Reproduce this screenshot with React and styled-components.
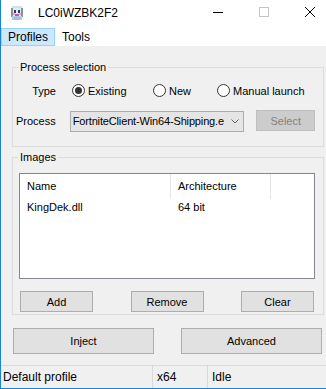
import React from 'react';
import styled, { createGlobalStyle } from 'styled-components';

const GlobalStyle = createGlobalStyle`
  html, body {
    margin: 0;
    padding: 0;
    overflow: hidden;
    background: #f0f0f0;
  }
  body {
    font-family: "Liberation Sans", Arial, sans-serif;
    font-size: 11px;
    color: #000;
  }
`;

const Window = styled.div`
  width: 334px;
  height: 389px;
  box-sizing: border-box;
  border-left: 1px solid #1883d7;
  border-right: 1px solid #1883d7;
  border-bottom: 1px solid #1883d7;
  background: #f0f0f0;
  display: flex;
  flex-direction: column;
`;

const TitleBar = styled.div`
  height: 28px;
  flex-shrink: 0;
  background: #fff;
  display: flex;
  align-items: flex-start;
`;

const AppIcon = styled.div`
  width: 16px;
  height: 16px;
  margin: 5px 0 0 8px;
`;

const Title = styled.div`
  margin: 6px 0 0 13px;
  font-size: 12px;
  line-height: 15px;
  flex: 1;
`;

const CaptionButton = styled.div`
  width: 46px;
  height: 28px;
  display: flex;
  justify-content: center;
  padding-top: 7px;
  box-sizing: border-box;
`;

const MenuBar = styled.div`
  height: 18px;
  flex-shrink: 0;
  background: #fff;
  display: flex;
  font-size: 12px;
`;

const MenuItem = styled.div`
  padding: 0 6px;
  line-height: 16px;
  border: 1px solid ${p => (p.$active ? '#99d1ff' : 'transparent')};
  background: ${p => (p.$active ? '#cce8ff' : 'transparent')};
`;

const Content = styled.div`
  flex: 1;
  display: flex;
  flex-direction: column;
  padding: 15px 9px 0 11px;
`;

const GroupBox = styled.fieldset`
  margin: ${p => p.$mt || 0}px 0 0 0;
  padding: ${p => p.$pad};
  height: ${p => p.$h}px;
  box-sizing: border-box;
  border: 1px solid #dcdcdc;
  min-width: 0;
`;

const Legend = styled.legend`
  padding: 0 2px;
  margin-left: 5px;
  line-height: 13px;
`;

const Row = styled.div`
  display: flex;
  align-items: center;
  height: 21px;
  margin-top: ${p => p.$mt || 0}px;
`;

const FieldLabel = styled.div`
  width: 43px;
  text-align: right;
  margin-right: ${p => p.$gap}px;
`;

const RadioOption = styled.label`
  display: flex;
  align-items: center;
  width: ${p => p.$w || 'auto'};
`;

const RadioCircle = styled.span`
  width: 13px;
  height: 13px;
  box-sizing: border-box;
  border-radius: 50%;
  border: 1px solid #333;
  background: #fff;
  display: flex;
  align-items: center;
  justify-content: center;
  margin-right: 3px;
  &::after {
    content: '';
    width: 7px;
    height: 7px;
    border-radius: 50%;
    background: ${p => (p.$checked ? '#333' : 'transparent')};
  }
`;

const ComboBox = styled.div`
  width: 176px;
  height: 21px;
  box-sizing: border-box;
  border: 1px solid #acacac;
  background: #e5e5e5;
  display: flex;
  align-items: center;
  padding-left: 2px;
  margin-top: 1px;
`;

const ComboText = styled.div`
  flex: 1;
  white-space: nowrap;
  letter-spacing: -0.15px;
`;

const ComboArrow = styled.div`
  width: 17px;
  display: flex;
  justify-content: center;
  flex-shrink: 0;
`;

const Button = styled.div`
  width: ${p => p.$w}px;
  height: ${p => p.$h}px;
  box-sizing: border-box;
  border: 1px solid ${p => (p.$disabled ? '#bfbfbf' : '#adadad')};
  background: ${p => (p.$disabled ? '#cccccc' : '#e1e1e1')};
  color: ${p => (p.$disabled ? '#838383' : '#000')};
  display: flex;
  align-items: center;
  justify-content: center;
  margin-left: ${p => p.$ml || 0}px;
`;

const ListView = styled.div`
  height: 106px;
  box-sizing: border-box;
  border: 1px solid #828790;
  background: #fff;
  margin: 9px 8px 0 6px;
`;

const ListHeader = styled.div`
  display: grid;
  grid-template-columns: 151px 100px 1fr;
  height: 25px;
`;

const HeaderCell = styled.div`
  padding-left: 7px;
  line-height: 25px;
  border-right: ${p => (p.$last ? 'none' : '1px solid #e5e5e5')};
`;

const ListRow = styled.div`
  display: grid;
  grid-template-columns: 151px 100px 1fr;
  height: 17px;
  line-height: 17px;
`;

const Cell = styled.div`
  padding-left: 7px;
`;

const ButtonRow = styled.div`
  display: flex;
  justify-content: space-between;
  margin: 12px 9px 0 7px;
`;

const ActionRow = styled.div`
  display: flex;
  justify-content: space-between;
  margin: 13px 2px 0 1px;
`;

const StatusBar = styled.div`
  margin-top: auto;
  height: 23px;
  box-sizing: border-box;
  border-top: 1px solid #dadada;
  display: flex;
`;

const StatusPanel = styled.div`
  width: ${p => (p.$w ? `${p.$w}px` : 'auto')};
  flex: ${p => (p.$w ? 'none' : 1)};
  padding-left: ${p => p.$pl || 4}px;
  line-height: 22px;
  font-size: 12px;
  border-right: ${p => (p.$sep ? '1px solid #dadada' : 'none')};
`;

const Icon = () => (
  <svg width="16" height="16" viewBox="0 0 16 16" shapeRendering="crispEdges">
    <rect x="3" y="1" width="10" height="3" fill="#d8dce4" />
    <rect x="2" y="3" width="12" height="8" fill="#d4f2f6" />
    <rect x="2" y="3" width="2" height="9" fill="#8a90a0" />
    <rect x="12" y="3" width="2" height="9" fill="#8a90a0" />
    <rect x="5" y="5" width="2" height="3" fill="#3a3a5a" />
    <rect x="9" y="5" width="2" height="3" fill="#3a3a5a" />
    <rect x="4" y="8" width="2" height="2" fill="#f0a0d0" />
    <rect x="10" y="8" width="2" height="2" fill="#f0a0d0" />
    <rect x="6" y="9" width="4" height="2" fill="#b060b8" />
    <rect x="3" y="11" width="10" height="4" fill="#9ad8e4" />
    <rect x="5" y="12" width="6" height="3" fill="#e0a0e0" />
  </svg>
);

const Chevron = () => (
  <svg width="8" height="5" viewBox="0 0 8 5">
    <polyline points="0.5,0.5 4,4 7.5,0.5" fill="none" stroke="#606060" strokeWidth="1" />
  </svg>
);

const App = () => (
  <>
    <GlobalStyle />
    <Window>
      <TitleBar>
        <AppIcon><Icon /></AppIcon>
        <Title>LC0iWZBK2F2</Title>
        <CaptionButton>
          <svg width="10" height="10" viewBox="0 0 10 10">
            <line x1="0" y1="5.5" x2="10" y2="5.5" stroke="#000" strokeWidth="1" />
          </svg>
        </CaptionButton>
        <CaptionButton>
          <svg width="10" height="10" viewBox="0 0 10 10">
            <rect x="0.5" y="0.5" width="9" height="9" fill="none" stroke="#c4c4c4" strokeWidth="1" />
          </svg>
        </CaptionButton>
        <CaptionButton>
          <svg width="10" height="10" viewBox="0 0 10 10">
            <path d="M0 0 L10 10 M10 0 L0 10" stroke="#000" strokeWidth="1" />
          </svg>
        </CaptionButton>
      </TitleBar>
      <MenuBar>
        <MenuItem $active>Profiles</MenuItem>
        <MenuItem>Tools</MenuItem>
      </MenuBar>
      <Content>
        <GroupBox $h={86} $pad="6px 8px 0 0">
          <Legend>Process selection</Legend>
          <Row>
            <FieldLabel $gap={16}>Type</FieldLabel>
            <RadioOption $w="81px"><RadioCircle $checked />Existing</RadioOption>
            <RadioOption $w="64px"><RadioCircle />New</RadioOption>
            <RadioOption><RadioCircle />Manual launch</RadioOption>
          </Row>
          <Row $mt={9}>
            <FieldLabel $gap={14}>Process</FieldLabel>
            <ComboBox>
              <ComboText>FortniteClient-Win64-Shipping.e</ComboText>
              <ComboArrow><Chevron /></ComboArrow>
            </ComboBox>
            <Button $w={59} $h={21} $ml={12} $disabled>Select</Button>
          </Row>
        </GroupBox>
        <GroupBox $h={164} $mt={4} $pad="0">
          <Legend>Images</Legend>
          <ListView>
            <ListHeader>
              <HeaderCell>Name</HeaderCell>
              <HeaderCell>Architecture</HeaderCell>
              <HeaderCell $last />
            </ListHeader>
            <ListRow>
              <Cell>KingDek.dll</Cell>
              <Cell>64 bit</Cell>
              <Cell />
            </ListRow>
          </ListView>
          <ButtonRow>
            <Button $w={73} $h={21}>Add</Button>
            <Button $w={73} $h={21}>Remove</Button>
            <Button $w={73} $h={21}>Clear</Button>
          </ButtonRow>
        </GroupBox>
        <ActionRow>
          <Button $w={141} $h={26}>Inject</Button>
          <Button $w={141} $h={26}>Advanced</Button>
        </ActionRow>
      </Content>
      <StatusBar>
        <StatusPanel $w={149} $pl={2} $sep>Default profile</StatusPanel>
        <StatusPanel $w={50} $sep>x64</StatusPanel>
        <StatusPanel>Idle</StatusPanel>
      </StatusBar>
    </Window>
  </>
);

export default App;
